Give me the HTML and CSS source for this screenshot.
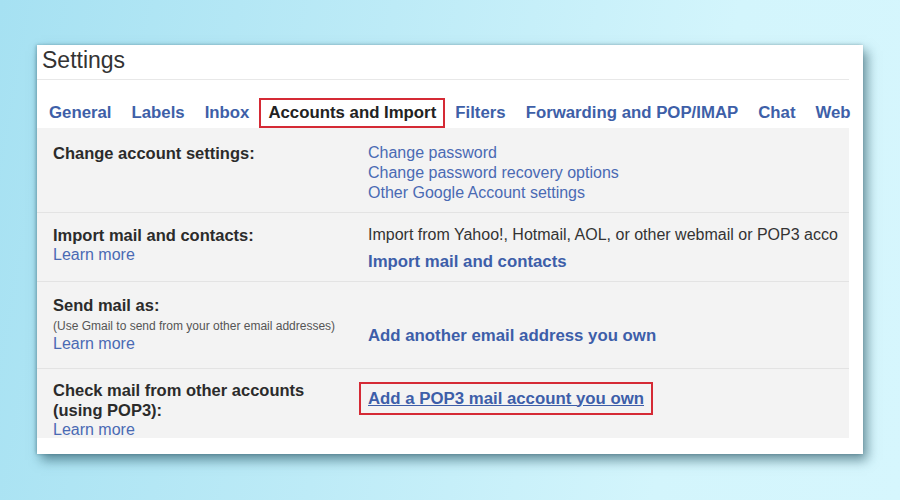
FILE: index.html
```html
<!DOCTYPE html>
<html>
<head>
<meta charset="utf-8">
<link rel="stylesheet" href="styles.css">
</head>
<body>
<div class="card">
  <div class="inner">
    <div class="title">Settings</div>
    <nav class="tabs">
      <span class="tab">General</span>
      <span class="tab">Labels</span>
      <span class="tab">Inbox</span>
      <span class="tab active">Accounts and Import</span>
      <span class="tab">Filters</span>
      <span class="tab">Forwarding and POP/IMAP</span>
      <span class="tab">Chat</span>
      <span class="tab">Web</span>
    </nav>
    <div class="panel">
      <div class="row r1">
        <div class="label"><div class="head">Change account settings:</div></div>
        <div class="value">
          <div class="link">Change password</div>
          <div class="link">Change password recovery options</div>
          <div class="link">Other Google Account settings</div>
        </div>
      </div>
      <div class="row r2">
        <div class="label">
          <div class="head">Import mail and contacts:</div>
          <div class="link">Learn more</div>
        </div>
        <div class="value">
          <div class="plain">Import from Yahoo!, Hotmail, AOL, or other webmail or POP3 acco</div>
          <div class="blink gap7">Import mail and contacts</div>
        </div>
      </div>
      <div class="row r3">
        <div class="label">
          <div class="head">Send mail as:</div>
          <div class="small">(Use Gmail to send from your other email addresses)</div>
          <div class="link">Learn more</div>
        </div>
        <div class="value">
          <div class="blink gap31">Add another email address you own</div>
        </div>
      </div>
      <div class="row r4">
        <div class="label">
          <div class="head">Check mail from other accounts</div>
          <div class="head">(using POP3):</div>
          <div class="link">Learn more</div>
        </div>
        <div class="value">
          <div class="boxed"><span class="blink under">Add a POP3 mail account you own</span></div>
        </div>
      </div>
    </div>
  </div>
</div>
</body>
</html>
```

FILE: styles.css
```css
html, body {
  margin: 0;
  padding: 0;
}
body {
  width: 900px;
  height: 500px;
  overflow: hidden;
  background: linear-gradient(100deg, #a6e1f2 0%, #bdebf7 40%, #d3f5fc 75%, #d6f6fd 100%);
  font-family: "Liberation Sans", Arial, sans-serif;
}
.card {
  box-sizing: border-box;
  margin: 45px 0 0 37px;
  width: 826px;
  height: 409px;
  background: #ffffff;
  padding-right: 14px;
  overflow: hidden;
  box-shadow: 4px 6px 11px rgba(30, 75, 90, 0.6), -1px 0 3px rgba(30, 80, 95, 0.35);
}
.inner {
  width: 812px;
}
.title {
  box-sizing: border-box;
  height: 35px;
  padding: 0 0 4px 5px;
  font-size: 23px;
  line-height: 30px;
  color: #333333;
  border-bottom: 1px solid #e8e8e8;
}
.tabs {
  display: flex;
  align-items: flex-end;
  width: 816px;
  height: 48px;
  padding-left: 2px;
  box-sizing: border-box;
  white-space: nowrap;
  overflow: hidden;
}
.tab {
  flex: none;
  padding: 0 8px;
  border: 2px solid transparent;
  font-size: 16.8px;
  font-weight: bold;
  line-height: 26px;
  color: #3e5fa8;
}
.tab:last-child {
  padding-right: 0;
}
.tab.active {
  padding: 0 7px;
  border-color: #d52a35;
  color: #222222;
}
.panel {
  height: 310px;
  background: #f3f3f3;
  overflow: hidden;
  white-space: nowrap;
}
.row {
  box-sizing: border-box;
  display: grid;
  grid-template-columns: 315px minmax(0, 1fr);
  padding-left: 16px;
  border-bottom: 1px solid #e3e3e3;
  overflow: hidden;
}
.r1 { height: 85px; padding-top: 15px; }
.r2 { height: 69px; padding-top: 12px; }
.r3 { height: 87px; padding-top: 13px; }
.r4 { height: 69px; padding-top: 11px; border-bottom: none; }
.head {
  font-size: 16.5px;
  font-weight: bold;
  line-height: 20px;
  color: #2b2b2b;
}
.link {
  font-size: 16px;
  line-height: 20px;
  color: #4a6ab3;
}
.plain {
  font-size: 16px;
  line-height: 20px;
  color: #333333;
}
.small {
  margin-top: 3px;
  font-size: 12px;
  line-height: 16px;
  color: #555555;
}
.blink {
  font-size: 16.8px;
  font-weight: bold;
  line-height: 20px;
  color: #3d5ea9;
}
.gap7 { margin-top: 7px; }
.gap31 { margin-top: 31px; }
.boxed {
  display: inline-block;
  margin: 2px 0 0 -9px;
  padding: 4.5px 7px;
  border: 2px solid #d52a35;
}
.under {
  text-decoration: underline;
}
```
